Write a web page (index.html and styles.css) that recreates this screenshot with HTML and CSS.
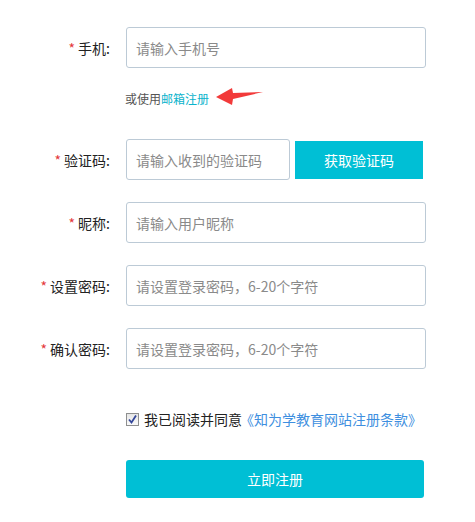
FILE: index.html
```html
<!DOCTYPE html>
<html lang="zh-CN">
<head>
<meta charset="utf-8">
<title>注册</title>
<link rel="stylesheet" href="styles.css">
</head>
<body>
<form class="form">
  <div class="row">
    <label class="label"><span class="star">*</span> 手机:</label>
    <div class="field"><input class="input" placeholder="请输入手机号"></div>
  </div>
  <div class="hint-row">
    <span class="hint">或使用<a class="hint-link">邮箱注册</a></span>
    <svg class="arrow" width="48" height="18" viewBox="0 0 48 18"><polygon points="0,9 16,0 17,5 47,4 17,11 16,17" fill="#f23a3a"/></svg>
  </div>
  <div class="row">
    <label class="label"><span class="star">*</span> 验证码:</label>
    <div class="field field-code">
      <input class="input input-code" placeholder="请输入收到的验证码">
      <button type="button" class="btn-code">获取验证码</button>
    </div>
  </div>
  <div class="row">
    <label class="label"><span class="star">*</span> 昵称:</label>
    <div class="field"><input class="input" placeholder="请输入用户昵称"></div>
  </div>
  <div class="row">
    <label class="label"><span class="star">*</span> 设置密码:</label>
    <div class="field"><input class="input" placeholder="请设置登录密码，6-20个字符"></div>
  </div>
  <div class="row">
    <label class="label"><span class="star">*</span> 确认密码:</label>
    <div class="field"><input class="input" placeholder="请设置登录密码，6-20个字符"></div>
  </div>
  <div class="agree-row">
    <span class="checkbox"><svg width="11" height="11" viewBox="0 0 11 11"><path d="M2 5.5 L4.5 8.5 L9 1.5" fill="none" stroke="#34479a" stroke-width="1.8"/></svg></span>
    <span class="agree-text">我已阅读并同意</span><a class="agree-link">《知为学教育网站注册条款》</a>
  </div>
  <div class="submit-row">
    <button type="button" class="btn-submit">立即注册</button>
  </div>
</form>
</body>
</html>
```
FILE: styles.css
```css
* { box-sizing: border-box; }
body {
  margin: 0;
  background: #fff;
  font-family: "Noto Sans CJK SC", "Noto Sans", sans-serif;
  color: #333;
  font-size: 14px;
}
.form {
  padding-top: 27px;
  width: 475px;
}
.row {
  display: grid;
  grid-template-columns: 110px 300px;
  column-gap: 16px;
  align-items: center;
  height: 41px;
  margin-bottom: 22px;
}
.label {
  text-align: right;
  font-size: 14px;
  color: #222;
  white-space: nowrap;
}
.star {
  color: #e4393c;
}
.field {
  display: flex;
  height: 41px;
}
.input {
  width: 300px;
  height: 41px;
  border: 1px solid #bccad6;
  border-radius: 3px;
  padding: 0 9px;
  font-family: inherit;
  font-size: 14px;
  color: #333;
  outline: none;
}
.input::placeholder { color: #8a8a8a; }
.field-code {
  align-items: center;
  gap: 5px;
}
.input-code {
  width: 164px;
}
.btn-code {
  width: 128px;
  height: 38px;
  border: none;
  background: #00bfd5;
  color: #fff;
  font-family: inherit;
  font-size: 14px;
  padding: 0;
}
.hint-row {
  display: flex;
  align-items: center;
  margin-top: -12px;
  margin-left: 125px;
  height: 40px;
  margin-bottom: 21px;
}
.hint {
  font-size: 12px;
  color: #555;
}
.hint-link {
  color: #0ab3cc;
}
.arrow {
  margin-left: 7px;
  margin-top: -3px;
}
.agree-row {
  display: flex;
  align-items: center;
  margin-left: 126px;
  margin-top: 40px;
  height: 20px;
}
.checkbox {
  width: 13px;
  height: 13px;
  border: 1px solid #8e8f8f;
  background: linear-gradient(#e6e6e6, #fafafa);
  display: flex;
  align-items: center;
  justify-content: center;
  margin-right: 5px;
}
.agree-text {
  font-size: 14px;
  color: #222;
}
.agree-link {
  font-size: 14px;
  color: #3e8fe0;
  margin-left: -2px;
}
.submit-row {
  margin-left: 126px;
  margin-top: 31px;
}
.btn-submit {
  width: 298px;
  height: 38px;
  border: none;
  border-radius: 3px;
  background: #00bfd5;
  color: #fff;
  font-family: inherit;
  font-size: 14px;
}
```
